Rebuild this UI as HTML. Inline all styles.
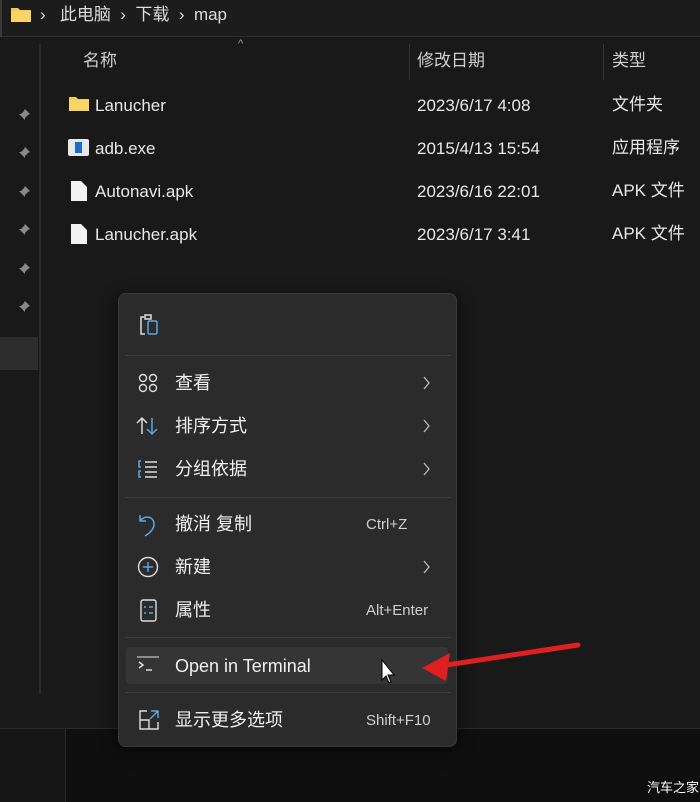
<!DOCTYPE html>
<html><head><meta charset="utf-8"><style>
*{margin:0;padding:0;box-sizing:border-box}
body{width:700px;height:802px;background:#191919;position:relative;overflow:hidden;font-family:"Liberation Sans","Noto Sans CJK SC",sans-serif;color:#e8e8e8}
.a{position:absolute}
.t{font-size:17px;white-space:nowrap;line-height:20px}
.m{font-size:18px;white-space:nowrap;color:#f0f0f0;line-height:22px}
.k{font-size:15px;color:#cfcfcf;white-space:nowrap;line-height:18px}
</style></head><body>
<div class="a" style="left:0;top:0;width:700px;height:37px;background:#1c1c1c;border-bottom:1px solid #2e2e2e"></div>
<div class="a" style="left:0;top:0;width:2px;height:37px;background:#3a3a3a"></div>
<svg class="a" style="left:10px;top:5px" width="22" height="18"><path d="M1 3h7l2 2h11v12H1z" fill="#f3c94e"/><path d="M1 6h20v11H1z" fill="#f8d565"/></svg>
<div class="a t" style="left:40px;top:5px;color:#ddd">›&nbsp;&nbsp; 此电脑 &nbsp;›&nbsp; 下载 &nbsp;›&nbsp; map</div>
<div class="a" style="left:39px;top:44px;width:2px;height:650px;background:#2a2a2a"></div>
<div class="a" style="left:0;top:337px;width:38px;height:33px;background:#2d2d2d"></div>
<div class="a" style="left:409px;top:44px;width:1px;height:36px;background:#333"></div>
<div class="a" style="left:603px;top:44px;width:1px;height:36px;background:#333"></div>
<div class="a" style="left:238px;top:38px;font-size:11px;color:#999">^</div>
<div class="a t" style="left:83px;top:51px;color:#cfcfcf">名称</div>
<div class="a t" style="left:417px;top:51px;color:#cfcfcf">修改日期</div>
<div class="a t" style="left:612px;top:51px;color:#cfcfcf">类型</div>
<svg class="a" style="left:18px;top:106px" width="14" height="220" fill="#888"><g id="p"><path d="M5 1l7 7-2 1-3 3v2L1 8h2l3-3 1-2zM4 10l-3 3"/></g><use href="#p" y="38"/><use href="#p" y="77"/><use href="#p" y="115"/><use href="#p" y="154"/><use href="#p" y="192"/></svg>
<svg class="a" style="left:68px;top:95px" width="22" height="18"><path d="M1 2h7l2 2h11v12H1z" fill="#f3c94e"/><path d="M1 5h20v11H1z" fill="#f8d565"/></svg>
<div class="a" style="left:68px;top:139px;width:21px;height:17px;background:#e8e8e8;border-radius:2px"><div style="margin:3px 0 0 7px;width:7px;height:11px;background:#1e6cc8"></div></div>
<svg class="a" style="left:71px;top:181px" width="16" height="20"><path d="M0 0h10l6 6v14H0z" fill="#f2f2f2"/></svg>
<svg class="a" style="left:71px;top:224px" width="16" height="20"><path d="M0 0h10l6 6v14H0z" fill="#f2f2f2"/></svg>
<div class="a t" style="left:95px;top:96px">Lanucher</div>
<div class="a t" style="left:95px;top:139px">adb.exe</div>
<div class="a t" style="left:95px;top:182px">Autonavi.apk</div>
<div class="a t" style="left:95px;top:225px">Lanucher.apk</div>
<div class="a t" style="left:417px;top:96px">2023/6/17 4:08</div>
<div class="a t" style="left:417px;top:139px">2015/4/13 15:54</div>
<div class="a t" style="left:417px;top:182px">2023/6/16 22:01</div>
<div class="a t" style="left:417px;top:225px">2023/6/17 3:41</div>
<div class="a t" style="left:612px;top:95px">文件夹</div>
<div class="a t" style="left:612px;top:138px">应用程序</div>
<div class="a t" style="left:612px;top:181px">APK 文件</div>
<div class="a t" style="left:612px;top:224px">APK 文件</div>
<div class="a" style="left:0;top:728px;width:700px;height:74px;background:#0f0f0f;border-top:1px solid #2a2a2a"></div>
<div class="a" style="left:65px;top:729px;width:1px;height:73px;background:#2a2a2a"></div>
<div class="a" style="left:0;top:729px;width:65px;height:73px;background:#161616"></div>
<div class="a" style="left:647px;top:777px;font-size:13px;color:#fff">汽车之家</div>
<div class="a" style="left:118px;top:293px;width:339px;height:454px;background:#2b2b2b;border:1px solid #3a3a3a;border-radius:8px;box-shadow:0 4px 16px rgba(0,0,0,.6)"></div>
<svg class="a" style="left:138px;top:314px" width="22" height="22" fill="none" stroke-width="1.5"><path d="M6 3H3v17h4" stroke="#ddd"/><path d="M7 1h6v4H7z" stroke="#ddd"/><rect x="10" y="7" width="9" height="13" rx="1.5" stroke="#5aa8e6"/></svg>
<div class="a" style="left:125px;top:355px;width:326px;height:1px;background:#3d3d3d"></div>
<div class="a" style="left:125px;top:497px;width:326px;height:1px;background:#3d3d3d"></div>
<div class="a" style="left:125px;top:637px;width:326px;height:1px;background:#3d3d3d"></div>
<div class="a" style="left:125px;top:692px;width:326px;height:1px;background:#3d3d3d"></div>
<div class="a" style="left:126px;top:647px;width:322px;height:37px;background:#353535;border-radius:4px"></div>
<svg class="a" style="left:138px;top:373px" width="22" height="20" fill="none" stroke="#ddd" stroke-width="1.4"><circle cx="5" cy="5" r="3.5"/><circle cx="15" cy="5" r="3.5"/><circle cx="5" cy="15" r="3.5"/><circle cx="15" cy="15" r="3.5"/></svg>
<svg class="a" style="left:136px;top:416px" width="24" height="20" fill="none" stroke-width="1.5"><path d="M6 18V2M1 7l5-5 5 5" stroke="#ddd"/><path d="M16 2v16M11 13l5 5 5-5" stroke="#5aa8e6"/></svg>
<svg class="a" style="left:137px;top:459px" width="22" height="20" fill="none" stroke-width="1.5"><path d="M4 2H2v6h2M4 12H2v6h2" stroke="#5aa8e6"/><path d="M8 3h12M8 8h12M8 13h12M8 18h12" stroke="#ddd"/></svg>
<svg class="a" style="left:138px;top:513px" width="22" height="24" fill="none" stroke="#5aa8e6" stroke-width="1.5"><path d="M2 2v6h6M2 8c4-6 14-5 14 3 0 5-4 9-9 12"/></svg>
<svg class="a" style="left:137px;top:556px" width="22" height="22" fill="none" stroke="#ddd" stroke-width="1.4"><circle cx="11" cy="11" r="9.5"/><path d="M11 6v10M6 11h10" stroke="#5aa8e6"/></svg>
<svg class="a" style="left:140px;top:599px" width="18" height="24" fill="none" stroke="#ddd" stroke-width="1.4"><rect x="1" y="1" width="15" height="21" rx="2"/><path d="M4 8h2M9 8h4M4 14h2M9 14h4" stroke="#5aa8e6"/></svg>
<svg class="a" style="left:137px;top:656px" width="22" height="18" fill="none" stroke-width="1.5"><path d="M0 1h22" stroke="#aaa"/><path d="M2 6l4 3-4 3" stroke="#ddd"/><path d="M9 14h6" stroke="#ddd"/></svg>
<svg class="a" style="left:138px;top:709px" width="22" height="22" fill="none" stroke-width="1.4"><path d="M9 2H2v18h18v-7" stroke="#ddd"/><path d="M2 11h9v9" stroke="#ddd"/><path d="M13 2h7v7M20 2l-8 8" stroke="#5aa8e6"/></svg>
<div class="a m" style="left:175px;top:372px">查看</div>
<div class="a m" style="left:175px;top:415px">排序方式</div>
<div class="a m" style="left:175px;top:458px">分组依据</div>
<div class="a m" style="left:175px;top:513px">撤消 复制</div>
<div class="a m" style="left:175px;top:556px">新建</div>
<div class="a m" style="left:175px;top:599px">属性</div>
<div class="a m" style="left:175px;top:655px">Open in Terminal</div>
<div class="a m" style="left:175px;top:709px">显示更多选项</div>
<div class="a k" style="left:366px;top:516px">Ctrl+Z</div>
<div class="a k" style="left:366px;top:602px">Alt+Enter</div>
<div class="a k" style="left:366px;top:712px">Shift+F10</div>
<svg class="a" style="left:422px;top:375px" width="10" height="200" fill="none" stroke="#bbb" stroke-width="1.3"><path d="M2 2l5 6-5 6M2 45l5 6-5 6M2 88l5 6-5 6M2 186l5 6-5 6"/></svg>
<svg class="a" style="left:380px;top:640px" width="210" height="50"><path d="M2 20v20l4-4 3 7 2-1-3-7h6z" fill="#fff" stroke="#000" stroke-width="1"/><path d="M198 5L60 26" stroke="#e02020" stroke-width="5" stroke-linecap="round"/><path d="M42 28l28-15-4 28z" fill="#e02020"/></svg>
</body></html>
